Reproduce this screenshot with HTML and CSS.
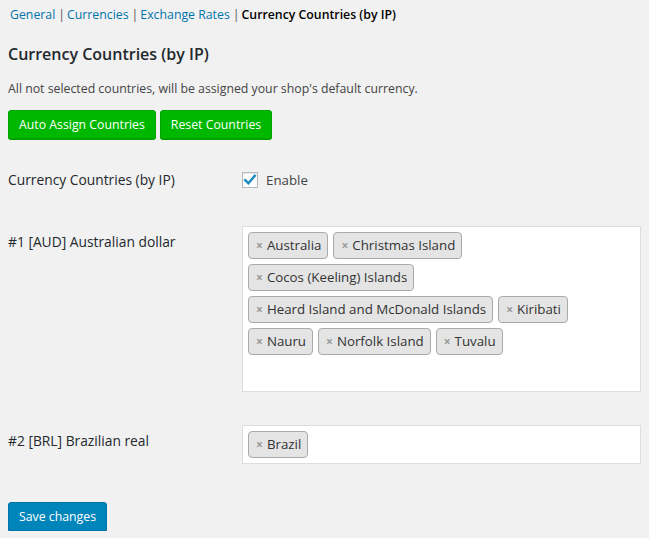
FILE: index.html
```html
<!DOCTYPE html>
<html>
<head>
<meta charset="utf-8">
<link rel="stylesheet" href="styles.css">
</head>
<body>
<div class="wrap">
  <ul class="subnav">
    <li><a href="#">General</a><span class="sep">|</span></li>
    <li><a href="#">Currencies</a><span class="sep">|</span></li>
    <li><a href="#">Exchange Rates</a><span class="sep">|</span></li>
    <li><span class="current">Currency Countries (by IP)</span></li>
  </ul>
  <h2 class="title">Currency Countries (by IP)</h2>
  <p class="desc">All not selected countries, will be assigned your shop's default currency.</p>
  <div class="actions">
    <button class="btn-green">Auto Assign Countries</button>
    <button class="btn-green">Reset Countries</button>
  </div>
  <div class="form">
    <div class="row row-enable">
      <div class="label">Currency Countries (by IP)</div>
      <div class="field">
        <label class="check"><span class="box"><svg width="14" height="14" viewBox="0 0 14 14"><path d="M2.2 7.2 L5.4 10.2 L11.8 2.8" fill="none" stroke="#1e8cbe" stroke-width="2.4" stroke-linecap="square"/></svg></span>Enable</label>
      </div>
    </div>
    <div class="row row-sel">
      <div class="label">#1 [AUD] Australian dollar</div>
      <div class="field">
        <ul class="select big">
          <li class="tag"><span class="x">×</span>Australia</li>
          <li class="tag"><span class="x">×</span>Christmas Island</li>
          <li class="tag"><span class="x">×</span>Cocos (Keeling) Islands</li>
          <li class="tag"><span class="x">×</span>Heard Island and McDonald Islands</li>
          <li class="tag"><span class="x">×</span>Kiribati</li>
          <li class="tag"><span class="x">×</span>Nauru</li>
          <li class="tag"><span class="x">×</span>Norfolk Island</li>
          <li class="tag"><span class="x">×</span>Tuvalu</li>
        </ul>
      </div>
    </div>
    <div class="row row-sel">
      <div class="label">#2 [BRL] Brazilian real</div>
      <div class="field">
        <ul class="select">
          <li class="tag"><span class="x">×</span>Brazil</li>
        </ul>
      </div>
    </div>
  </div>
  <button class="btn-primary">Save changes</button>
</div>
</body>
</html>
```

FILE: styles.css
```css
html, body {
  margin: 0;
  padding: 0;
  background: #f1f1f1;
}
body {
  font-family: "Open Sans", "Noto Sans", sans-serif;
  font-size: 12.3px;
  color: #444;
}
.wrap {
  padding: 0 8px;
}
.subnav {
  list-style: none;
  margin: 0;
  padding: 6px 0 0 2px;
  display: flex;
  line-height: 18px;
  font-size: 12.3px;
}
.subnav a {
  color: #0073aa;
  text-decoration: none;
}
.sep {
  color: #555;
  padding: 0 2px 0 3px;
}
.current {
  color: #000;
  font-weight: 600;
}
.title {
  margin: 19px 0 0;
  font-size: 16px;
  line-height: 22px;
  font-weight: 600;
  color: #23282d;
}
.desc {
  margin: 15px 0 0;
  line-height: 18px;
  color: #444;
}
.actions {
  display: flex;
  gap: 4px;
  margin-top: 12px;
}
.btn-green {
  font-family: inherit;
  font-size: 12.3px;
  color: #fff;
  background: #00b700;
  border: 1px solid #00a500;
  border-radius: 3px;
  height: 29px;
  padding: 0 10px;
  line-height: 27px;
  box-shadow: 0 1px 0 #009c00;
}
.form {
  margin-top: 17px;
}
.row {
  display: flex;
}
.label {
  width: 234px;
  flex: none;
  font-size: 13.8px;
  line-height: 18px;
  color: #23282d;
}
.field {
  flex: 1;
}
.row-enable {
  padding: 15px 0 22px;
}
.check {
  display: flex;
  align-items: center;
  font-size: 13.3px;
  color: #444;
  line-height: 18px;
}
.box {
  width: 16px;
  height: 16px;
  box-sizing: border-box;
  border: 1px solid #b4b9be;
  background: #fff;
  box-shadow: inset 0 1px 2px rgba(0,0,0,0.1);
  margin-right: 8px;
  display: flex;
  align-items: center;
  justify-content: center;
}
.row-sel {
  padding: 15px 0 18px;
}
.row-sel .label {
  padding-top: 7px;
}
.select {
  list-style: none;
  margin: 0;
  padding: 0 5px 5px;
  background: #fff;
  border: 1px solid #ddd;
  display: flex;
  flex-wrap: wrap;
  align-content: flex-start;
  box-sizing: border-box;
}
.select.big {
  min-height: 166px;
}
.tag {
  margin: 5px 5px 0 0;
  height: 27px;
  box-sizing: border-box;
  padding: 0 6px 0 7px;
  line-height: 25px;
  background: #e4e4e4;
  border: 1px solid #aaa;
  border-radius: 4px;
  font-size: 13.3px;
  color: #333;
  white-space: nowrap;
}
.x {
  color: #999;
  font-weight: bold;
  font-size: 12px;
  margin-right: 4px;
}
.btn-primary {
  margin-top: 20px;
  font-family: inherit;
  font-size: 12.3px;
  color: #fff;
  background: #0085ba;
  border: 1px solid #0073aa;
  border-radius: 3px;
  height: 29px;
  padding: 0 10px;
  line-height: 27px;
  box-shadow: 0 1px 0 #006799;
}
```
